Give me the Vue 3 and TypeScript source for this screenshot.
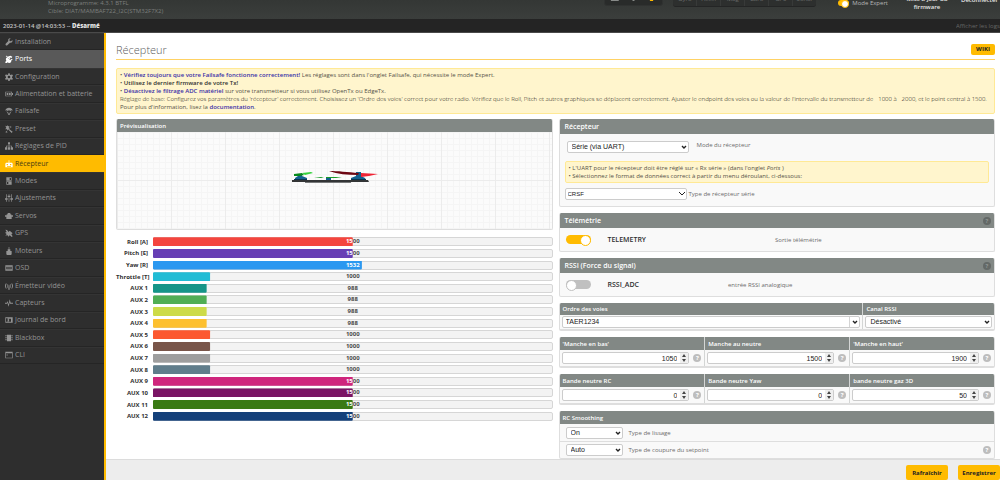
<script setup lang="ts">
import { ref } from 'vue'

interface MenuItem {
  label: string
  icon: string
  state?: 'hover' | 'active'
}

interface Channel {
  name: string
  value: number
  color: string
}

interface NumberField {
  id: string
  label: string
  value: number
}

const menu: MenuItem[] = [
  { label: 'Installation', icon: 'M22 6l-4 4-4-1-1-4 4-4c-5-1-9 3-7 8L2 17c-2 3 2 7 5 5l8-8c5 2 9-3 7-8z' },
  { label: 'Ports', icon: 'M0 22l4-5c-3-5-1-8 3-10l3 4 5-5 2 2-4 5 2 2 6-4 2 2-5 5 1 2c-3 4-8 5-11 2l-4 3zM2 3l3-1 3 3 8-3 6 3-2 4-4-2-6 3z', state: 'hover' },
  { label: 'Configuration', icon: 'M10 1h4l1 4 3 1 3-2 3 4-3 3v3l3 3-3 4-3-2-3 1-1 4h-4l-1-4-3-1-3 2-3-4 3-3v-3L0 8l3-4 3 2 3-1zM12 8a4 4 0 1 0 0 8 4 4 0 1 0 0-8z' },
  { label: 'Alimentation et batterie', icon: 'M1 5h20v4h3v6h-3v4H1zM3 7v10h16V7zM5 9h5v6H5zM12 9h5v6h-5z' },
  { label: 'Failsafe', icon: 'M1 11C2 4 7 2 12 2s10 2 11 9l-4-1-3 2-4-2-4 2-3-2zM4 13l3 1 3 4v4zM20 13l-3 1-3 4v4zM9 17h6v6H9z' },
  { label: 'Preset', icon: 'M1 2l5 2 1-4 2 4 5-1-3 4 4 3-4 1 12 9-3 4-11-11-2 4-2-5-5 1 4-4zM17 2l1 3 3 1-3 1-1 3-1-3-3-1 3-1zM3 17l5 5-6 1z' },
  { label: 'Réglages de PID', icon: 'M9 1h6v6h-2v4h8v5h3v7h-7v-7h2v-3h-6v3h2v7H9v-7h2v-3H5v3h2v7H0v-7h3v-5h8V7H9z' },
  { label: 'Récepteur', icon: 'M11 1h2v7h8l2 3v11H1V11l2-3h8zM5 12v4h4v-4zM15 12v4h4v-4zM6 18v2h12v-2z', state: 'active' },
  { label: 'Modes', icon: 'M4 1h16v10H4zM14 3v6h4V3zM4 13h16v10H4zM6 15v6h4v-6z' },
  { label: 'Ajustements', icon: 'M3 1h2v12h3v4H5v6H3v-6H0v-4h3zM11 1h2v4h3v4h-3v14h-2V9H8V5h3zM19 1h2v12h3v4h-3v6h-2v-6h-3v-4h3z' },
  { label: 'Servos', icon: 'M8 3h8v4h3v3h5v4h-4v7H4v-7H0v-4h5V7h3z' },
  { label: 'GPS', icon: 'M1 2l5 1 5 6 3-4 9 8-4 3 4 6-3 2-6-5-4 4-3-5-6 3 4-6-5-4 5-2z' },
  { label: 'Moteurs', icon: 'M11 0h2v7h3v5h4v10l-2 2H6l-2-2V12h4V7h3z' },
  { label: 'OSD', icon: 'M1 4h22v16H1zM4 8v7h4V8zM10 8v7h4V8zM16 8v7h4V8zM4 17v1h16v-1z' },
  { label: 'Émetteur vidéo', icon: 'M3 4C-1 9-1 15 3 20l2-1C2 14 2 10 5 5zM8 6c-3 4-3 8 0 12l1-1c-2-4-2-6 0-10zM21 4c4 5 4 11 0 16l-2-1c3-5 3-9 0-14zM16 6c3 4 3 8 0 12l-1-1c2-4 2-6 0-10zM11 8h2l1 15h-4z' },
  { label: 'Capteurs', icon: 'M0 11h6l2-5 3 10 3-15 3 10h7v3h-9l-1-4-3 13-4-12-1 3H0z' },
  { label: 'Journal de bord', icon: 'M1 4h22v16H1zM3 7v10h5V7zM10 8l3 4-3 5h8V8z' },
  { label: 'Blackbox', icon: 'M6 2h12v20H6zM1 4h4v3H1zM1 10h4v3H1zM1 16h4v3H1zM19 4h4v3h-4zM19 10h4v3h-4zM19 16h4v3h-4z' },
  { label: 'CLI', icon: 'M1 2h22v20H1zM3 7v13h18V7zM5 9l4 3-4 3v-2l2-1-2-1z' },
]

const channels: Channel[] = [
  { name: 'Roll [A]', value: 1500, color: '#f4453e' },
  { name: 'Pitch [E]', value: 1500, color: '#673fb4' },
  { name: 'Yaw [R]', value: 1532, color: '#2b98f0' },
  { name: 'Throttle [T]', value: 1000, color: '#21bcd5' },
  { name: 'AUX 1', value: 988, color: '#159588' },
  { name: 'AUX 2', value: 988, color: '#50ae54' },
  { name: 'AUX 3', value: 988, color: '#cddb48' },
  { name: 'AUX 4', value: 988, color: '#fdc02f' },
  { name: 'AUX 5', value: 1000, color: '#fc5830' },
  { name: 'AUX 6', value: 1000, color: '#795549' },
  { name: 'AUX 7', value: 1000, color: '#9e9e9e' },
  { name: 'AUX 8', value: 1000, color: '#607d8b' },
  { name: 'AUX 9', value: 1500, color: '#cf267d' },
  { name: 'AUX 10', value: 1500, color: '#7a1464' },
  { name: 'AUX 11', value: 1500, color: '#3a7a14' },
  { name: 'AUX 12', value: 1500, color: '#14407a' },
]

const sensors = ['Gyro', 'Accel', 'Mag', 'Baro', 'GPS', 'Sonar']

const fieldRows = ref<NumberField[][]>([
  [
    { id: 'stick-min', label: "'Manche en bas'", value: 1050 },
    { id: 'stick-center', label: 'Manche au neutre', value: 1500 },
    { id: 'stick-max', label: "'Manche en haut'", value: 1900 },
  ],
  [
    { id: 'deadband', label: 'Bande neutre RC', value: 0 },
    { id: 'yaw-deadband', label: 'Bande neutre Yaw', value: 0 },
    { id: 'throttle-deadband', label: 'bande neutre gaz 3D', value: 50 },
  ],
])

const expert = ref(true)
const telemetry = ref(true)
const rssiAdc = ref(false)

const remainder = (value: number): string => `${100 - ((value - 800) / 1400) * 100}%`
const fillStyle = (c: Channel) => ({
  backgroundColor: c.color,
  clipPath: `inset(0 ${remainder(c.value)} 0 0 round 1px)`,
})
</script>

<template>
  <div class="app">
    <header class="top">
      <div class="version">
        <div>Microprogramme: 4.3.1 BTFL</div>
        <div>Cible: DIAT/MAMBAF722_I2C(STM32F7X2)</div>
      </div>
      <div class="battery">
        <svg viewBox="0 0 58 6" aria-hidden="true">
          <path d="M6 1h8v1H6z" fill="#8b8e8c" />
          <path d="M28 1h2v1h-2z" fill="#8b8e8c" />
          <path d="M45 0h4v2h-3z" fill="#ffbb00" />
        </svg>
      </div>
      <ul class="sensors">
        <li v-for="s in sensors" :key="s">{{ s }}</li>
      </ul>
      <label class="expert">
        <input v-model="expert" type="checkbox" class="switch small" />
        Mode Expert
      </label>
      <button type="button" class="top-button">Mise à jour du<br />firmware</button>
      <button type="button" class="top-button single">Déconnecter</button>
    </header>

    <div class="status">
      <span>2023-01-14 @14:03:53 -- <b>Désarmé</b></span>
      <a href="#">Afficher les logs</a>
    </div>

    <div class="workspace">
      <nav class="side">
        <ul>
          <li v-for="m in menu" :key="m.label" :class="m.state">
            <a href="#">
              <svg viewBox="0 0 24 24" aria-hidden="true">
                <path :d="m.icon" fill="currentColor" fill-rule="evenodd" />
              </svg>
              {{ m.label }}
            </a>
          </li>
        </ul>
      </nav>

      <main class="content">
        <div class="scroll">
          <div class="title">
            <h1>Récepteur</h1>
            <a href="#" class="wiki">WIKI</a>
          </div>

          <div class="note">
            • <a href="#">Vérifiez toujours que votre Failsafe fonctionne correctement!</a> Les réglages sont dans l'onglet
            Failsafe, qui nécessite le mode Expert.<br />
            • <b>Utilisez le dernier firmware de votre Tx!</b><br />
            • <a href="#">Désactivez le filtrage ADC matériel</a> sur votre transmetteur si vous utilisez OpenTx ou
            EdgeTx.<br />
            <span class="line">Réglage de base: Configurez vos paramètres du 'récepteur' correctement. Choisissez un
              'Ordre des voies' correct pour votre radio. Vérifiez que le Roll, Pitch et autres graphiques se déplacent
              correctement. Ajuster le endpoint des voies ou la valeur de l'intervalle du transmetteur de ~1000 à ~2000,
              et le point central à 1500.</span><br />
            Pour plus d'information, lisez la <a href="#">documentation</a>.
          </div>

          <div class="columns">
            <div class="left">
              <section class="panel">
                <h2 class="slim">Prévisualisation</h2>
                <div class="preview">
                  <svg viewBox="0 0 90 22" aria-hidden="true">
                    <path d="M3 10h76l1 2H3z" fill="#333536" />
                    <path d="M16 12h46v1H16z" fill="#77797a" />
                    <path d="M6 10V8l3-2V4h4v2l5 2v2z" fill="#12608f" />
                    <path d="M5 9h13v1H5z" fill="#0a3550" />
                    <path d="M5 4l8-1 2 2-4 1H5z" fill="#078a1c" />
                    <path d="M13 3l9-1 2 1-8 2z" fill="#34d23c" />
                    <path d="M25 7h10l-3 1zM37 7h16l-6 1H37z" fill="#189a26" />
                    <path d="M37 10V8h5v2z" fill="#12608f" />
                    <path d="M62 10V8l5-2V2h5v4l4 2 1 2z" fill="#12608f" />
                    <path d="M62 9h15v1H62z" fill="#0a3550" />
                    <path d="M40 1c9 0 18 1 30 2l-1 2c-11 0-20-1-29-4z" fill="#6d0712" />
                    <path d="M72 3l17 1-9 2-8 1z" fill="#ef2334" />
                  </svg>
                </div>
              </section>

              <ul class="bars">
                <li v-for="c in channels" :key="c.name">
                  <span class="name">{{ c.name }}</span>
                  <div class="track">
                    <span class="value">{{ c.value }}</span>
                    <span class="fill" :style="fillStyle(c)" aria-hidden="true">{{ c.value }}</span>
                  </div>
                </li>
              </ul>
            </div>

            <div class="right">
              <section class="panel">
                <h2>Récepteur</h2>
                <div class="receiver">
                  <div class="row mode">
                    <span class="select">
                      <select id="rx-mode">
                        <option>Série (via UART)</option>
                      </select>
                      <svg viewBox="0 0 6 4" aria-hidden="true"><path d="M1 1l2 2 2-2" /></svg>
                    </span>
                    <label for="rx-mode">Mode du récepteur</label>
                  </div>
                  <div class="note inner">
                    • L'UART pour le récepteur doit être réglé sur « Rx série » (dans l'onglet <i>Ports</i> )<br />
                    • Sélectionnez le format de données correct à partir du menu déroulant, ci-dessous:
                  </div>
                  <div class="row serial">
                    <span class="select">
                      <select id="rx-serial">
                        <option>CRSF</option>
                      </select>
                      <svg class="thin" viewBox="0 0 6 4" aria-hidden="true"><path d="M0 0l3 3 3-3" /></svg>
                    </span>
                    <label for="rx-serial">Type de récepteur série</label>
                  </div>
                </div>
              </section>

              <section class="panel">
                <h2>Télémétrie <span class="help dark">?</span></h2>
                <div class="feature">
                  <input id="telemetry" v-model="telemetry" type="checkbox" class="switch" />
                  <label for="telemetry">TELEMETRY</label>
                  <span class="telemetry-text">Sortie télémétrie</span>
                </div>
              </section>

              <section class="panel">
                <h2>RSSI (Force du signal) <span class="help dark">?</span></h2>
                <div class="feature">
                  <input id="rssi" v-model="rssiAdc" type="checkbox" class="switch" />
                  <label for="rssi">RSSI_ADC</label>
                  <span class="rssi-text">entrée RSSI analogique</span>
                </div>
              </section>

              <section class="panel cells map">
                <div class="cell">
                  <label for="channel-map">Ordre des voies</label>
                  <div class="field">
                    <span class="select split">
                      <select id="channel-map">
                        <option>TAER1234</option>
                      </select>
                      <svg viewBox="0 0 6 4" aria-hidden="true"><path d="M1 1l2 2 2-2" /></svg>
                    </span>
                  </div>
                </div>
                <div class="cell">
                  <label for="rssi-channel">Canal RSSI</label>
                  <div class="field">
                    <span class="select">
                      <select id="rssi-channel">
                        <option>Désactivé</option>
                      </select>
                      <svg viewBox="0 0 6 4" aria-hidden="true"><path d="M1 1l2 2 2-2" /></svg>
                    </span>
                  </div>
                </div>
              </section>

              <section v-for="(row, i) in fieldRows" :key="i" class="panel cells numbers">
                <div v-for="f in row" :key="f.id" class="cell">
                  <label :for="f.id">{{ f.label }}</label>
                  <div class="field">
                    <span class="number">
                      <input :id="f.id" v-model="f.value" type="number" />
                      <svg viewBox="0 0 8 10" aria-hidden="true"><path d="M2 4l2-3 2 3zM2 6l2 3 2-3z" /></svg>
                    </span>
                    <span class="help">?</span>
                  </div>
                </div>
              </section>

              <section class="panel">
                <h2 class="slim">RC Smoothing</h2>
                <div class="smooth">
                  <span class="select">
                    <select id="smoothing">
                      <option>On</option>
                    </select>
                    <svg viewBox="0 0 6 4" aria-hidden="true"><path d="M1 1l2 2 2-2" /></svg>
                  </span>
                  <label for="smoothing">Type de lissage</label>
                </div>
                <div class="smooth">
                  <span class="select">
                    <select id="cutoff">
                      <option>Auto</option>
                    </select>
                    <svg viewBox="0 0 6 4" aria-hidden="true"><path d="M1 1l2 2 2-2" /></svg>
                  </span>
                  <label for="cutoff">Type de coupure du setpoint</label>
                  <span class="help">?</span>
                </div>
              </section>
            </div>
          </div>
        </div>

        <footer class="actions">
          <button type="button">Rafraîchir</button>
          <button type="button">Enregistrer</button>
        </footer>
      </main>
    </div>
  </div>
</template>

<style>
html,
body {
  margin: 0;
  overflow: hidden;
}
</style>

<style scoped>
* {
  box-sizing: border-box;
}

.app {
  display: flex;
  flex-direction: column;
  height: 100vh;
  overflow: hidden;
  background: #fff;
  color: #303030;
  font: 6px/8px 'Open Sans', 'Noto Sans', sans-serif;
}

ul {
  list-style: none;
  margin: 0;
  padding: 0;
}

h1,
h2 {
  margin: 0;
}

a {
  color: inherit;
  text-decoration: none;
}

button {
  border: 0;
  padding: 0;
  font: inherit;
}

/* top bar */
.top {
  display: flex;
  align-items: flex-end;
  flex: none;
  height: 19px;
  padding-right: 2px;
  overflow: hidden;
  background: linear-gradient(#343735, #3b3e3c);
  color: #d8d8d8;
}

.version {
  flex: 1;
  padding: 0 0 4px 48px;
  color: #7c7f7d;
  white-space: nowrap;
}

.battery {
  width: 59px;
  height: 16px;
  margin: 0 10px 13px 0;
  border: 1px solid #303231;
  border-radius: 3px;
  background: #292b2a;
  display: flex;
  align-items: flex-end;
}

.battery svg {
  width: 100%;
  height: 6px;
}

.sensors {
  display: flex;
  width: 143px;
  height: 20px;
  margin: 0 22px 12px 0;
  border-radius: 3px;
  background: #2d2f2e;
  border-bottom: 1px solid #242525;
  color: #6a6c6b;
}

.sensors li {
  flex: 1;
  display: flex;
  align-items: flex-end;
  justify-content: center;
  padding-bottom: 3px;
  border-right: 1px solid #383a39;
}

.sensors li:last-child {
  border-right: 0;
}

.expert {
  display: flex;
  align-items: center;
  gap: 3px;
  margin: 0 14px 12px 0;
  color: #b5b7b6;
  white-space: nowrap;
}

.top-button {
  width: 50px;
  margin-right: 9px;
  padding-bottom: 8px;
  background: none;
  color: #e6e6e6;
  font-weight: 600;
  white-space: nowrap;
}

.top-button.single {
  width: 37px;
  margin-right: 0;
  padding-bottom: 15px;
}

/* status line */
.status {
  display: flex;
  flex: none;
  justify-content: space-between;
  align-items: center;
  height: 14px;
  padding-left: 3px;
  border-bottom: 1px solid #4a4a4a;
  background: #242424;
  color: #c4c4c4;
  font-weight: 600;
  white-space: nowrap;
}

.status b {
  color: #e2e2e2;
}

.status a {
  width: 44px;
  overflow: hidden;
  color: #666;
  font-weight: 400;
}

.workspace {
  display: flex;
  flex: 1;
  min-height: 0;
}

/* side menu */
.side {
  flex: none;
  width: 106px;
  border-right: 2px solid #ffbb00;
  background: #2e2e2e;
}

.side ul {
  display: grid;
  grid-auto-rows: 1fr;
  height: 331px;
}

.side li {
  border-top: 1px solid #343434;
  border-bottom: 1px solid #252525;
  color: #949494;
}

.side a {
  display: flex;
  align-items: center;
  gap: 2px;
  height: 100%;
  padding-left: 5px;
  font-size: 7px;
  white-space: nowrap;
}

.side svg {
  width: 8px;
  height: 8px;
}

.side .hover {
  border-color: #595959;
  background: #595959;
  color: #fff;
}

.side .active {
  border-color: #ffbb00;
  background: #ffbb00;
  color: #4a3c12;
}

.side .active svg {
  color: #fff;
}

/* page */
.content {
  display: flex;
  flex: 1;
  flex-direction: column;
  min-width: 0;
}

.scroll {
  flex: 1;
  min-height: 0;
  padding: 9px 5px 0 10px;
  overflow: hidden;
}

.title {
  display: flex;
  align-items: center;
  justify-content: space-between;
  height: 18px;
  padding-bottom: 2px;
  border-bottom: 1px solid #ffd264;
}

.title h1 {
  color: #5c5c5c;
  font-size: 11px;
  line-height: 14px;
  font-weight: 300;
}

.wiki {
  width: 24px;
  border-radius: 2px;
  background: #ffbb00;
  color: #222;
  font-weight: 700;
  line-height: 11px;
  text-align: center;
}

.note {
  margin: 8px 0 5px;
  padding: 2px 3px;
  border: 1px solid #ffe995;
  border-radius: 2px;
  background: #fff5cd;
  color: #555248;
}

.line {
  color: #15140f;
  font-weight: 300;
  white-space: nowrap;
}

.note a {
  color: #3a30a8;
  font-weight: 600;
}

.note b {
  color: #303030;
  font-weight: 600;
}

.columns {
  display: grid;
  grid-template-columns: 1fr 1fr;
  gap: 6px;
}

.panel {
  margin-bottom: 6px;
  border: 1px solid #dedede;
  border-top: 0;
  border-radius: 2px;
  overflow: hidden;
  background: #f9f9f9;
}

.panel h2 {
  display: flex;
  align-items: center;
  justify-content: space-between;
  height: 15px;
  padding: 0 3px 0 5px;
  background: #828885;
  color: #fff;
  font-size: 7px;
  font-weight: 600;
}

.panel h2.slim {
  height: 13px;
  padding-left: 3px;
  font-size: 6px;
}

.preview {
  display: grid;
  place-items: center;
  height: 97px;
  background-color: #fbfbfb;
  background-image: linear-gradient(90deg, #ececec 1px, transparent 1px),
    linear-gradient(#ececec 1px, transparent 1px),
    linear-gradient(90deg, #f5f5f5 1px, transparent 1px),
    linear-gradient(#f5f5f5 1px, transparent 1px);
  background-size: 54px 100%, 100% 54px, 6px 100%, 100% 6px;
  background-position: 54px 0, 0 48px, 0 0, 0 0;
}

.preview svg {
  width: 90px;
  height: 22px;
}

.bars {
  display: grid;
  grid-auto-rows: 1fr;
  align-items: center;
  height: 186px;
}

.bars li {
  display: flex;
  align-items: center;
  gap: 5px;
  height: 9px;
}

.name {
  width: 32px;
  font-weight: 700;
  text-align: right;
  white-space: nowrap;
}

.track {
  position: relative;
  flex: 1;
  height: 9px;
  border: 1px solid #d6d6d6;
  border-radius: 2px;
  background: #f3f3f3;
  color: #4a4a4a;
  font-weight: 700;
  line-height: 9px;
  text-align: center;
}

.value,
.fill {
  position: absolute;
  inset: -1px;
}

.fill {
  color: #fff;
}

/* form controls */
.select {
  position: relative;
  display: flex;
}

.select select {
  width: 100%;
  height: 12px;
  padding: 0 4px;
  border: 1px solid #ccc;
  border-radius: 2px;
  background: #fff;
  color: #222;
  font: 7px/10px 'Liberation Sans', Arial, sans-serif;
  appearance: none;
}

.select svg {
  position: absolute;
  top: 4px;
  right: 2px;
  width: 6px;
  height: 4px;
  fill: none;
  stroke: #222;
  stroke-width: 1.4;
  pointer-events: none;
}

.select svg.thin {
  stroke-width: 1;
}

.select.split select {
  padding-left: 3px;
}

.select.split::after {
  content: '';
  position: absolute;
  top: 1px;
  right: 10px;
  bottom: 1px;
  border-left: 1px solid #d4d4d4;
}

.receiver {
  padding: 7px 5px 6px;
  color: #6c6c6c;
}

.row {
  display: flex;
}

.row .select {
  width: 122px;
}

.mode {
  gap: 8px;
  padding-left: 2px;
}

.serial {
  align-items: center;
  gap: 2px;
}

.serial select {
  padding-left: 2px;
  font-size: 6px;
}

.note.inner {
  margin: 8px 0 5px;
}

.feature {
  display: grid;
  grid-template-columns: 42px 1fr 340px;
  align-items: center;
  height: 23px;
  padding-left: 6px;
}

.feature label {
  font-size: 7px;
  font-weight: 600;
  white-space: nowrap;
}

.feature span {
  color: #6c6c6c;
}

.telemetry-text {
  padding-left: 121px;
}

.rssi-text {
  padding-left: 74px;
}

.switch {
  position: relative;
  width: 25px;
  height: 9px;
  margin: 0;
  border-radius: 5px;
  background: #c0c0c0;
  appearance: none;
}

.switch::before {
  content: '';
  position: absolute;
  top: 0;
  left: 0;
  width: 9px;
  height: 9px;
  border: 1px solid #c0c0c0;
  border-radius: 50%;
  background: #fff;
}

.switch:checked {
  background: #ffbb00;
}

.switch:checked::before {
  right: 0;
  left: auto;
  border-color: #ffbb00;
}

.switch.small {
  width: 11px;
  height: 6px;
}

.switch.small::before {
  width: 6px;
  height: 6px;
}

.help {
  flex: none;
  width: 8px;
  height: 8px;
  border-radius: 50%;
  background: #bdbdbd;
  color: #fff;
  font-size: 6px;
  font-weight: 700;
  text-align: center;
}

.help.dark {
  background: #646967;
  color: #8f9592;
}

.cells {
  display: grid;
  border-bottom-width: 2px;
}

.map {
  grid-template-columns: 304fr 132fr;
}

.numbers {
  grid-template-columns: 1fr 1fr 1fr;
}

.cell + .cell {
  border-left: 1px solid #d4d6d5;
}

.cell label {
  display: flex;
  align-items: center;
  height: 13px;
  padding-left: 3px;
  background: #828885;
  color: #fff;
  font-weight: 600;
}

.field {
  display: flex;
  align-items: center;
  gap: 4px;
  height: 16px;
  padding: 0 3px 0 2px;
}

.map .cell label {
  height: 12px;
}

.map .field {
  height: 14px;
  padding: 0 2px;
}

.field .select {
  flex: 1;
}

.number {
  position: relative;
  display: flex;
  flex: 1;
}

.number input {
  width: 100%;
  height: 12px;
  margin: 0;
  padding: 0 11px 0 2px;
  border: 1px solid #ccc;
  border-radius: 2px;
  background: #fff;
  color: #222;
  font: 7px/10px 'Liberation Sans', Arial, sans-serif;
  text-align: right;
  appearance: textfield;
}

.number input::-webkit-inner-spin-button {
  display: none;
}

.number svg {
  position: absolute;
  top: 1px;
  right: 1px;
  width: 8px;
  height: 10px;
  background: #efefef;
  fill: #444;
  pointer-events: none;
}

.smooth {
  display: flex;
  align-items: center;
  gap: 6px;
  height: 17px;
  padding: 0 3px 0 6px;
  color: #6c6c6c;
}

.smooth + .smooth {
  border-top: 1px solid #dedede;
}

.smooth .select {
  width: 57px;
}

.smooth label {
  flex: 1;
}

/* bottom bar */
.actions {
  display: flex;
  flex: none;
  justify-content: flex-end;
  gap: 10px;
  height: 21px;
  padding-top: 5px;
  border-top: 1px solid #dcdcdc;
  background: #ededed;
  overflow: hidden;
}

.actions button {
  width: 42px;
  height: 15px;
  border-radius: 2px;
  background: #ffbb00;
  color: #222;
  font-weight: 700;
}
</style>
